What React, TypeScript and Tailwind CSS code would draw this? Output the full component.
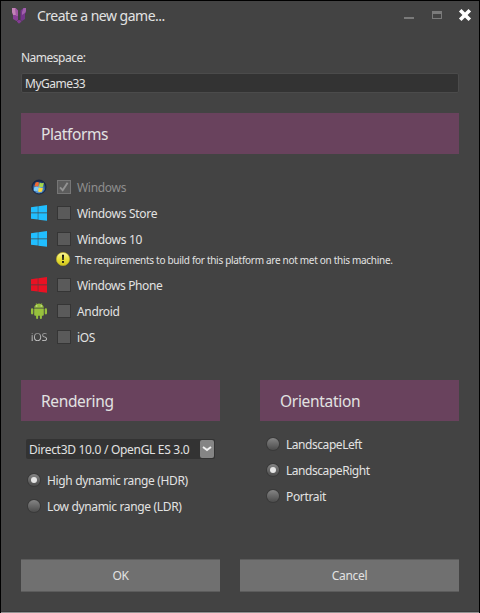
import type { ReactNode } from "react";

function Butterfly() {
  return (
    <svg className="mt-px" width="16" height="16" viewBox="0 0 16 16">
      <path d="M1 0H4.5L7 2.5V12L5.5 13L2 11V6L1 4Z" fill="#8a3f97" />
      <path d="M1 0H4.5L5 7H2L1 4Z" fill="#c283b6" />
      <path d="M4.5 0L7 2.5V8H4.8Z" fill="#a358a6" />
      <path d="M15 0H12.5L9.5 2.5V12L11 13L14 11V6L15 4Z" fill="#74358b" />
      <path d="M15 0H12.5L11 4V7L14 5L15 3Z" fill="#a05fab" />
      <path d="M6 13L7.5 12H9L10.3 13V14.2H9.2V15.2H7V14.2H6Z" fill="#833b94" />
    </svg>
  );
}

function WindowsOrb() {
  return (
    <svg width="16" height="16" viewBox="0 0 16 16">
      <defs>
        <radialGradient id="orb" cx="50%" cy="65%" r="55%">
          <stop offset="0" stopColor="#9ad6f5" />
          <stop offset="0.6" stopColor="#4079b5" />
          <stop offset="1" stopColor="#182c57" />
        </radialGradient>
      </defs>
      <circle cx="8" cy="8" r="7" fill="url(#orb)" stroke="#17233f" />
      <path d="M4.6 3.4Q6.3 2.4 8 3.4L7.3 7.5Q5.4 6.8 3.4 7.5Z" fill="#f36b32" />
      <path d="M8.7 3.6Q10.5 4.6 12.9 3.8L12 7.8Q9.7 8.6 8 7.6Z" fill="#a5d64b" />
      <path d="M3.2 8.2Q5.5 7.5 7.2 8.2L6.4 12.2Q4.7 11.4 2.8 12Z" fill="#7ccbf8" />
      <path d="M7.8 8.4Q9.6 9.4 11.9 8.7L11 12.6Q8.9 13.4 7.1 12.4Z" fill="#ffd83a" />
    </svg>
  );
}

function WindowsFlag({ color }: { color: string }) {
  return (
    <svg width="16" height="16" viewBox="0 0 16 16" fill={color}>
      <path d="M0 2.2L6.8 1.3V7.5H0ZM7.3 1.2L16 0V7.5H7.3ZM0 8.3H6.8V14.6L0 13.7ZM7.3 8.3H16V15.8L7.3 14.7Z" />
    </svg>
  );
}

function AndroidIcon() {
  return (
    <svg width="16" height="16" viewBox="0 0 16 16" fill="#97c03d">
      <path d="M3.2 4.8C3.4 2.9 4.5 1.8 5.5 1.2L4.7.2L5 0L6 .9Q8 .3 10 .9L11 0L11.3.2L10.5 1.2C11.5 1.8 12.6 2.9 12.8 4.8Z" />
      <path d="M3.2 5.4H12.8V11.8Q12.8 12.8 11.8 12.8H10.9V15Q10.9 16 9.9 16T8.9 15V12.8H7.1V15Q7.1 16 6.1 16T5.1 15V12.8H4.2Q3.2 12.8 3.2 11.8Z" />
      <rect x="0" y="5.2" width="2.3" height="6.2" rx="1.1" />
      <rect x="13.7" y="5.2" width="2.3" height="6.2" rx="1.1" />
      <circle cx="5.8" cy="2.9" r=".55" fill="#e8f0d8" />
      <circle cx="10.2" cy="2.9" r=".55" fill="#e8f0d8" />
    </svg>
  );
}

function WarningIcon() {
  return (
    <svg width="14" height="14" viewBox="0 0 14 14">
      <defs>
        <linearGradient id="warn" x1="0" y1="0" x2="0" y2="1">
          <stop offset="0" stopColor="#fbf7a0" />
          <stop offset="0.5" stopColor="#e9e23c" />
          <stop offset="1" stopColor="#d2c51a" />
        </linearGradient>
      </defs>
      <circle cx="7" cy="7" r="6.6" fill="url(#warn)" stroke="#b8ac2a" strokeWidth=".7" />
      <path d="M6 2.8H8L7.7 8H6.3Z" fill="#111" />
      <rect x="6.1" y="9" width="1.8" height="1.9" fill="#111" />
    </svg>
  );
}

function Checkbox({ checked = false }: { checked?: boolean }) {
  return checked ? (
    <span className="flex size-3.5 shrink-0 items-center justify-center border border-[#767676] bg-[#5c5c5c]">
      <svg width="12" height="12" viewBox="0 0 12 12" fill="none" stroke="#939393" strokeWidth="1.9">
        <path d="M2 6.3L4.7 9.2L9.6 1.8" />
      </svg>
    </span>
  ) : (
    <span className="size-3.5 shrink-0 border border-[#353535] bg-[#5a5a5a]" />
  );
}

function Platform({ icon, label, spacing, checked = false }: { icon: ReactNode; label: string; spacing: string; checked?: boolean }) {
  return (
    <div className={`flex h-[26px] items-center pl-[29px] ${checked ? "text-[#8e8e8e]" : ""}`}>
      <span className="flex w-[18px] shrink-0 justify-center">{icon}</span>
      <span className="ml-[9px] flex">
        <Checkbox checked={checked} />
      </span>
      <span className={`ml-1.5 whitespace-nowrap pt-px ${spacing}`}>{label}</span>
    </div>
  );
}

function Radio({ label, spacing, selected = false }: { label: string; spacing: string; selected?: boolean }) {
  return (
    <div className="flex h-[26px] items-center gap-[7px]">
      <span className="flex size-3 shrink-0 items-center justify-center rounded-full bg-linear-to-b from-[#858585] to-[#4c4c4c] shadow-[0_0_0_1px_#393939]">
        {selected && <span className="size-1.5 rounded-full bg-[#e6e6e6]" />}
      </span>
      <span className={`whitespace-nowrap pt-[2px] ${spacing}`}>{label}</span>
    </div>
  );
}

function Header({ title, spacing }: { title: string; spacing: string }) {
  return (
    <h2 className={`flex h-[41px] items-center bg-[#69425d] pl-5 pt-px text-[15.5px] ${spacing}`}>{title}</h2>
  );
}

export default function App() {
  return (
    <main className="flex h-[613px] w-[480px] flex-col overflow-hidden border border-b-0 border-black bg-[#434343] font-['Noto_Sans',sans-serif] text-[12px] leading-4 text-[#e2e2e2]">
      <header className="flex h-7 shrink-0 items-center pl-[10px] pr-[7px]">
        <Butterfly />
        <h1 className="ml-[10px] flex-1 whitespace-nowrap pt-[2px] text-[14px] tracking-[-0.5px]">Create a new game...</h1>
        <div className="flex items-center">
          <span className="mt-[6px] h-[2px] w-[10px] bg-[#7a7a7a]" />
          <span className="ml-[18px] h-2 w-[10px] border border-t-[3px] border-[#7a7a7a]" />
          <svg className="ml-[16px]" width="14" height="14" viewBox="0 0 14 14" stroke="#fff" strokeWidth="3.6">
            <path d="M2.2 2.2L11.8 11.8M11.8 2.2L2.2 11.8" />
          </svg>
        </div>
      </header>

      <section className="mt-[21px] px-5">
        <label className="block h-[23px] tracking-[-0.5px]">Namespace:</label>
        <div className="flex h-5 items-center rounded-[2px] border border-[#4b4b4b] bg-[#333] pl-[3px] pt-px tracking-[-0.5px]">MyGame33</div>
      </section>

      <section className="mt-5 px-5">
        <Header title="Platforms" spacing="tracking-[-0.4px]" />
      </section>
      <section className="mt-5">
        <Platform icon={<WindowsOrb />} label="Windows" spacing="tracking-[-0.3px]" checked />
        <Platform icon={<WindowsFlag color="#21beff" />} label="Windows Store" spacing="tracking-[-0.3px]" />
        <Platform icon={<WindowsFlag color="#21beff" />} label="Windows 10" spacing="tracking-[-0.3px]" />
        <div className="flex h-5 items-start pl-[55px]">
          <WarningIcon />
          <span className="ml-[5px] whitespace-nowrap text-[10px] tracking-[-0.3px]">The requirements to build for this platform are not met on this machine.</span>
        </div>
        <Platform icon={<WindowsFlag color="#e91123" />} label="Windows Phone" spacing="tracking-[-0.4px]" />
        <Platform icon={<AndroidIcon />} label="Android" spacing="tracking-[-0.35px]" />
        <Platform
          icon={<span className="bg-linear-to-b from-[#777] to-[#eee] bg-clip-text text-[11px] tracking-[-0.3px] text-transparent">iOS</span>}
          label="iOS"
          spacing="tracking-[-0.4px]"
        />
      </section>

      <div className="mt-[30px] flex justify-between px-5">
        <section className="w-[199px]">
          <Header title="Rendering" spacing="tracking-[-0.35px]" />
          <div className="ml-[5px] mt-[18px] flex h-5 w-[189px] items-center justify-between rounded-[2px] bg-[#333] px-[3px] pr-px">
            <span className="whitespace-nowrap pt-px tracking-[-0.3px]">Direct3D 10.0 / OpenGL ES 3.0</span>
            <span className="flex h-[18px] w-3.5 items-center justify-center rounded-[2px] bg-[#858585]">
              <svg width="10" height="6" viewBox="0 0 10 6" fill="none" stroke="#f0f0f0" strokeWidth="2">
                <path d="M1 1L5 4L9 1" />
              </svg>
            </span>
          </div>
          <div className="ml-[7px] mt-2">
            <Radio label="High dynamic range (HDR)" spacing="tracking-[-0.35px]" selected />
            <Radio label="Low dynamic range (LDR)" spacing="tracking-[-0.35px]" />
          </div>
        </section>
        <section className="w-[199px]">
          <Header title="Orientation" spacing="tracking-[-0.3px]" />
          <div className="ml-[7px] mt-[10px]">
            <Radio label="LandscapeLeft" spacing="tracking-[-0.45px]" />
            <Radio label="LandscapeRight" spacing="tracking-[-0.45px]" selected />
            <Radio label="Portrait" spacing="tracking-[-0.35px]" />
          </div>
        </section>
      </div>

      <footer className="mt-auto flex shrink-0 gap-5 px-5 pb-[19px]">
        <button className="h-[33px] w-[199px] border-y border-[#5c5c5c] bg-[#707070] tracking-[-0.3px]">OK</button>
        <button className="h-[33px] w-[219px] border-y border-[#5c5c5c] bg-[#707070] tracking-[-0.3px]">Cancel</button>
      </footer>
      <div className="-mx-px h-[2px] shrink-0 border-b border-[#929292] bg-[#3a3a3a]" />
    </main>
  );
}
